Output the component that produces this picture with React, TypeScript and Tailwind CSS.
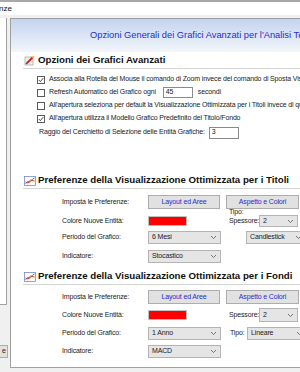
import React from 'react';

function Chevron() {
  return (
    <svg width="7" height="5" viewBox="0 0 7 5">
      <path d="M1 1 L3.5 3.5 L6 1" fill="none" stroke="#666" strokeWidth="0.9" />
    </svg>
  );
}

function Select({ text, className }: { text: string; className: string }) {
  return (
    <div className={`bg-[#e5e5e5] border border-[#b4b4b4] flex items-center justify-between pl-[3px] pr-[3px] text-[7px] tracking-[-0.15px] text-[#1a1a1a] shrink-0 ${className}`}>
      <span>{text}</span>
      <Chevron />
    </div>
  );
}

function Check({ checked }: { checked?: boolean }) {
  return (
    <div className="w-[8px] h-[8px] border border-[#5a5a5a] bg-white flex items-center justify-center shrink-0">
      {checked && (
        <svg width="6" height="6" viewBox="0 0 6 6">
          <path d="M0.8 3 L2.4 4.6 L5.2 1.2" fill="none" stroke="#333" strokeWidth="0.9" />
        </svg>
      )}
    </div>
  );
}

function Btn({ text, className }: { text: string; className: string }) {
  return (
    <div className={`bg-[#e1e1e1] border border-[#adadad] flex items-center justify-center text-[7px] tracking-[-0.15px] text-[#2b2bd0] shrink-0 ${className}`}>
      {text}
    </div>
  );
}

function EditIcon() {
  return (
    <svg width="11" height="11" viewBox="0 0 11 11">
      <rect x="1" y="2" width="8" height="8" fill="#f4f0e4" stroke="#9a8f7a" strokeWidth="0.6" />
      <path d="M3 8 L8.5 2.5" stroke="#d42020" strokeWidth="1.8" />
      <path d="M8.5 2.5 L10 1" stroke="#f0c020" strokeWidth="1.6" />
      <path d="M2 9 L3.2 7.8" stroke="#2040c0" strokeWidth="1.4" />
    </svg>
  );
}

function ChartIcon() {
  return (
    <svg width="12" height="10" viewBox="0 0 12 10">
      <rect x="0.5" y="0.5" width="11" height="9" fill="#ffffff" stroke="#6d8ec8" strokeWidth="0.8" />
      <path d="M1.5 8 L4 5 L6 6.5 L8.5 3 L10.5 2" fill="none" stroke="#2aa52a" strokeWidth="0.9" />
      <path d="M1.5 6 L4 7 L6.5 4 L10.5 5" fill="none" stroke="#d83030" strokeWidth="0.9" />
    </svg>
  );
}

function Heading({ text, icon }: { text: string; icon: React.ReactNode }) {
  return (
    <div className="h-[16px] ml-[12px] border-b border-[#d4d4d4] flex items-center shrink-0">
      <div className="w-[15px] flex items-center pl-[1px] shrink-0">{icon}</div>
      <span className="text-[9.7px] font-bold text-[#111] whitespace-nowrap">{text}</span>
    </div>
  );
}

function Label({ text }: { text: string }) {
  return <span className="w-[86px] shrink-0 text-[7px] tracking-[-0.15px] text-[#222] whitespace-nowrap">{text}</span>;
}

export default function App() {
  return (
    <div className="w-[300px] h-[372px] bg-[#f0f0f0] overflow-hidden font-['Liberation_Sans',Arial,sans-serif] flex flex-col">
      {/* title strip */}
      <div className="h-[15px] bg-white border-t-2 border-[#a8a8a8] flex items-center text-[8px] text-[#111] shrink-0">
        <span className="-ml-[1px]">nze</span>
      </div>
      <div className="h-[3px] shrink-0" />
      <div className="flex flex-row">
        {/* left column */}
        <div className="w-[10px] shrink-0 flex flex-col">
          <div className="w-[7px] h-[287px] bg-white border-r border-b border-[#a0a0a0]" />
          <div className="mt-[40px] w-[8px] h-[13px] bg-[#e1e1e1] border border-[#adadad] border-l-0 flex items-center justify-end pr-[1px] text-[7px] text-[#222] overflow-hidden">
            e
          </div>
        </div>
        {/* main panel */}
        <div className="w-[330px] h-[350px] shrink-0 border border-[#a0a0a0] bg-white flex flex-col overflow-hidden">
          <div className="h-[33px] shrink-0 bg-gradient-to-b from-[#c2d4ee] to-[#f3f6fb] flex items-center pl-[79px] text-[9.3px] text-[#2a2ad2] whitespace-nowrap">
            Opzioni Generali dei Grafici Avanzati per l'Analisi Tecnica
          </div>
          <div className="h-[1px] shrink-0" />
          <Heading text="Opzioni dei Grafici Avanzati" icon={<EditIcon />} />
          <div className="mt-[4px] flex flex-col pl-[26px] text-[7px] tracking-[-0.15px] text-[#222] whitespace-nowrap">
            <div className="h-[13px] flex items-center gap-[4px]">
              <Check checked />
              <span>Associa alla Rotella del Mouse il comando di Zoom invece del comando di Sposta Vista</span>
            </div>
            <div className="h-[13px] flex items-center gap-[4px]">
              <Check />
              <span>Refresh Automatico del Grafico ogni</span>
              <div className="ml-[3px] w-[30px] h-[11px] border border-[#8a8a8a] bg-white flex items-center pl-[2px] shrink-0">45</div>
              <span className="ml-[1px]">secondi</span>
            </div>
            <div className="h-[13px] flex items-center gap-[4px]">
              <Check />
              <span>All'apertura seleziona per default la Visualizzazione Ottimizzata per i Titoli invece di quella</span>
            </div>
            <div className="h-[13px] flex items-center gap-[4px]">
              <Check checked />
              <span>All'apertura utilizza il Modello Grafico Predefinito del Titolo/Fondo</span>
            </div>
            <div className="h-[15px] flex items-center pl-[2px] gap-[4px]">
              <span>Raggio del Cerchietto di Selezione delle Entità Grafiche:</span>
              <div className="w-[30px] h-[12px] border border-[#8a8a8a] bg-white flex items-center pl-[2px] shrink-0">3</div>
            </div>
          </div>
          <div className="h-[33px] shrink-0" />
          <Heading text="Preferenze della Visualizzazione Ottimizzata per i Titoli" icon={<ChartIcon />} />
          <div className="flex flex-col pl-[51px] mt-[6px]">
            <div className="h-[14px] flex items-center">
              <Label text="Imposta le Preferenze:" />
              <Btn text="Layout ed Aree" className="w-[72px] h-[14px]" />
              <Btn text="Aspetto e Colori" className="ml-[6px] w-[73px] h-[14px]" />
            </div>
            <div className="h-[6px] flex items-center">
              <span className="ml-[167px] text-[7px] tracking-[-0.15px] text-[#222]">Tipo:</span>
            </div>
            <div className="h-[12px] flex items-center">
              <Label text="Colore Nuove Entità:" />
              <div className="w-[39px] h-[10px] bg-[#ff0000] border border-[#c0c0c0] shrink-0" />
              <span className="ml-[42px] w-[30px] shrink-0 text-[7px] tracking-[-0.15px] text-[#222]">Spessore:</span>
              <Select text="2" className="w-[39px] h-[12px]" />
            </div>
            <div className="h-[13px] mt-[4px] flex items-center">
              <Label text="Periodo del Grafico:" />
              <Select text="6 Mesi" className="w-[73px] h-[13px]" />
              <Select text="Candlestick" className="ml-[25px] w-[60px] h-[13px]" />
            </div>
            <div className="h-[13px] mt-[6px] flex items-center">
              <Label text="Indicatore:" />
              <Select text="Stocastico" className="w-[73px] h-[13px]" />
            </div>
          </div>
          <div className="h-[6px] shrink-0" />
          <Heading text="Preferenze della Visualizzazione Ottimizzata per i Fondi" icon={<ChartIcon />} />
          <div className="flex flex-col pl-[51px] mt-[5px]">
            <div className="h-[14px] flex items-center">
              <Label text="Imposta le Preferenze:" />
              <Btn text="Layout ed Aree" className="w-[72px] h-[14px]" />
              <Btn text="Aspetto e Colori" className="ml-[6px] w-[73px] h-[14px]" />
            </div>
            <div className="h-[14px] mt-[4px] flex items-center">
              <Label text="Colore Nuove Entità:" />
              <div className="w-[39px] h-[10px] bg-[#ff0000] border border-[#c0c0c0] shrink-0" />
              <span className="ml-[42px] w-[30px] shrink-0 text-[7px] tracking-[-0.15px] text-[#222]">Spessore:</span>
              <Select text="2" className="w-[39px] h-[14px]" />
            </div>
            <div className="h-[13px] mt-[5px] flex items-center">
              <Label text="Periodo del Grafico:" />
              <Select text="1 Anno" className="w-[73px] h-[13px]" />
              <span className="ml-[9px] w-[17px] shrink-0 text-[7px] tracking-[-0.15px] text-[#222]">Tipo:</span>
              <Select text="Lineare" className="w-[60px] h-[13px]" />
            </div>
            <div className="h-[13px] mt-[5px] flex items-center">
              <Label text="Indicatore:" />
              <Select text="MACD" className="w-[73px] h-[13px]" />
            </div>
          </div>
        </div>
      </div>
    </div>
  );
}
